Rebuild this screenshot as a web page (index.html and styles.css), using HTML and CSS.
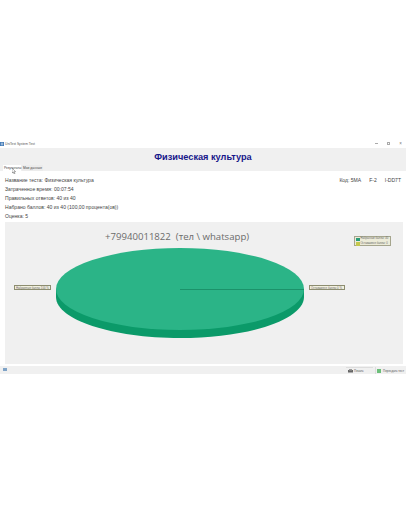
FILE: index.html
```html
<!DOCTYPE html>
<html lang="ru">
<head>
<meta charset="utf-8">
<title>UniTest System Test</title>
<link rel="stylesheet" href="styles.css">
</head>
<body>
<main class="window">
  <div class="titlebar">
    <svg class="app-icon" viewBox="0 0 5 5"><rect width="5" height="5" fill="#3f78b5"/><rect x="1" y="1" width="3" height="1" fill="#cfe0f0"/><rect x="1" y="3" width="3" height="1" fill="#cfe0f0"/></svg>
    <span class="title-text">UniTest System Test</span>
    <div class="win-controls">
      <span class="win-min"></span>
      <span class="win-max"></span>
      <span class="win-close">×</span>
    </div>
  </div>
  <header class="banner">
    <h1 class="heading">Физическая культура</h1>
    <div class="tabs">
      <span class="tab tab-active">Результаты</span>
      <span class="tab">Мои данные</span>
    </div>
    <svg class="cursor" viewBox="0 0 4 6"><path d="M0 0v5l1.200-1 1 2 .8-.4-1-1.900H3.600z" fill="#fff" stroke="#333" stroke-width=".4"/></svg>
  </header>
  <section class="info">
    <div class="info-row">
      <span>Название теста: Физическая культура</span>
      <span class="codes"><span>Код: 5MA</span><span>F-2</span><span>I-DD7T</span></span>
    </div>
    <div class="info-row"><span>Затраченное время: 00:07:54</span></div>
    <div class="info-row"><span>Правильных ответов: 40 из 40</span></div>
    <div class="info-row"><span>Набрано баллов: 40 из 40 (100,00 процента(ов))</span></div>
    <div class="info-row"><span>Оценка: 5</span></div>
  </section>
  <section class="chart">
    <svg class="pie" viewBox="0 0 406 142" aria-hidden="true">
      <path d="M56 67v8c0 22.600 55.500 41 124 41s124-18.400 124-41v-8z" fill="#0b9a69"/>
      <ellipse cx="180" cy="67" rx="124" ry="41" fill="#2bb487"/>
      <line x1="180" y1="67.500" x2="304" y2="67.500" stroke="#117a58" stroke-width=".6"/>
    </svg>
    <div class="watermark">+79940011822&nbsp; (тел \ whatsapp)</div>
    <div class="callout callout-left">Набранные баллы 100 %</div>
    <div class="callout callout-right">Оставшиеся баллы 0 %</div>
    <div class="legend">
      <div class="legend-row"><i class="swatch swatch-green"></i>Набранные баллы: 40</div>
      <div class="legend-row"><i class="swatch swatch-yellow"></i>Оставшиеся баллы: 0</div>
    </div>
  </section>
  <footer class="statusbar">
    <svg class="status-icon" viewBox="0 0 4 3"><rect width="4" height="3" fill="#7fa3c7"/></svg>
    <div class="actions">
      <span class="action action-print"><svg class="action-icon" viewBox="0 0 5 4"><rect y="1" width="5" height="2.500" fill="#666"/><rect x="1" width="3" height="1.500" fill="#999"/></svg>Печать</span>
      <span class="action action-retake"><svg class="action-icon" viewBox="0 0 5 4"><rect width="4" height="4" fill="#6cbf7a"/></svg>Пересдать тест</span>
    </div>
  </footer>
</main>
</body>
</html>
```

FILE: styles.css
```css
* { box-sizing: border-box; }
html, body { margin: 0; height: 100%; background: #fff; }
body {
  padding-top: 139px;
  font-family: "Liberation Sans", Arial, sans-serif;
  color: #333;
  overflow: hidden;
}
.window { width: 406px; height: 235px; display: flex; flex-direction: column; }

.titlebar {
  height: 9px;
  display: flex;
  align-items: center;
  gap: 1px;
  font-size: 3.300px;
  color: #555;
}
.app-icon { width: 4px; height: 4px; }
.win-controls { margin-left: auto; display: flex; align-items: center; gap: 9px; padding-right: 4px; color: #777; font-size: 4.500px; }
.win-min { width: 3px; height: 1px; background: #aaa; }
.win-max { width: 3px; height: 3px; border: 1px solid #aaa; }

.banner { height: 23px; background: #f0f0f0; position: relative; display: flex; flex-direction: column; }
.heading {
  margin: 0;
  padding-top: 3px;
  text-align: center;
  font-size: 9.200px;
  line-height: 13px;
  font-weight: 700;
  color: #17178a;
}
.tabs { margin-top: auto; display: flex; height: 6px; padding-left: 3px; gap: 1px; font-size: 3.300px; line-height: 6px; color: #444; }
.tab { padding: 0 1px; background: #ececec; }
.tab-active { background: #fff; width: 18px; }
.cursor { position: absolute; left: 12px; top: 20px; width: 4px; height: 6px; }

.info { height: 51px; padding: 5px 5px 0; display: flex; flex-direction: column; font-size: 5.050px; color: #444; }
.info-row { height: 9.100px; line-height: 9.100px; display: flex; justify-content: space-between; }
.codes { display: flex; gap: 8px; }

.chart {
  height: 142px;
  background: #f0f0f0;
  margin: 0 3px 0 5px;
  position: relative;
}
.pie { position: absolute; left: -5px; top: 0; width: 406px; height: 142px; }
.watermark {
  position: absolute;
  left: 100px;
  top: 7px;
  font-family: "Open Sans", sans-serif;
  font-size: 9.600px;
  line-height: 16px;
  color: #6b6b6b;
  white-space: nowrap;
}
.callout {
  position: absolute;
  height: 5px;
  font-size: 2.800px;
  line-height: 4px;
  padding: 0 1px;
  background: #f3f1df;
  border: 0.500px solid #8d8d70;
  color: #666;
  white-space: nowrap;
}
.callout-left { left: 9px; top: 63px; width: 37px; }
.callout-right { left: 304px; top: 63px; width: 36px; }
.legend {
  position: absolute;
  left: 349px;
  top: 14px;
  width: 37px;
  height: 10px;
  border: 0.500px solid #a5a58d;
  background: #ecebd8;
  font-size: 2.700px;
  color: #666;
}
.legend-row { height: 4.500px; line-height: 4.500px; display: flex; align-items: center; gap: 1px; padding-left: 1px; white-space: nowrap; }
.swatch { width: 3.500px; height: 3.500px; flex: none; }
.swatch-green { background: #2a9d78; }
.swatch-yellow { background: #c4c84e; }

.statusbar {
  margin-top: auto;
  height: 8px;
  background: #f0f0f0;
  display: flex;
  align-items: flex-start;
  padding: 1px 1px 0 3px;
}
.status-icon { width: 4px; height: 3px; margin-top: 1px; }
.actions { margin-left: auto; display: flex; gap: 2px; font-size: 2.900px; color: #555; }
.action { display: flex; align-items: center; gap: 1px; height: 7px; padding: 0 1px; white-space: nowrap; }
.action-print { width: 27px; padding-left: 2px; border-top: 0.500px solid #ddd; }
.action-retake { border-left: 0.500px solid #ddd; }
.action-icon { width: 5px; height: 4px; flex: none; }
```
